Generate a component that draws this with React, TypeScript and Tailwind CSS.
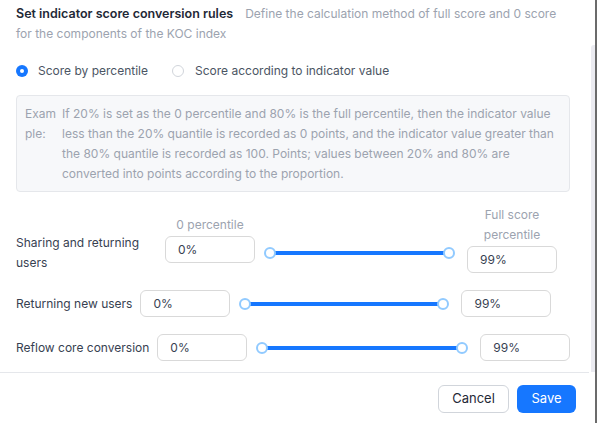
import React from 'react';

interface RuleRow {
  label: string;
  min: string;
  max: string;
  sliderWidth: string;
}

const rows: RuleRow[] = [
  { label: 'Sharing and returning users', min: '0%', max: '99%', sliderWidth: 'w-[191px]' },
  { label: 'Returning new users', min: '0%', max: '99%', sliderWidth: 'w-[210px]' },
  { label: 'Reflow core conversion', min: '0%', max: '99%', sliderWidth: 'w-[212px]' },
];

function Slider({ width, className = '' }: { width: string; className?: string }) {
  return (
    <div className={`relative h-3 flex items-center shrink-0 ${width} ${className}`}>
      <div className="absolute left-[6px] right-[6px] h-1 rounded-full bg-[#1677ff]" />
      <span className="absolute left-0 w-3 h-3 rounded-full bg-white border-2 border-[#91caff]" />
      <span className="absolute right-0 w-3 h-3 rounded-full bg-white border-2 border-[#91caff]" />
    </div>
  );
}

function PercentInput({ value }: { value: string }) {
  return (
    <div className="w-[90px] h-[27px] shrink-0 rounded-md border border-[#d9d9d9] bg-white flex items-center px-3 text-[12px] text-[#374151]">
      {value}
    </div>
  );
}

export default function App() {
  return (
    <div
      className="w-[597px] h-[423px] bg-white flex flex-col overflow-hidden border-r-2 border-[#6b6b6b]"
      style={{ fontFamily: 'Inter, "Noto Sans", sans-serif' }}
    >
      <div className="flex h-[372px]">
        <div className="flex-1 pl-4 pr-[21px] pt-1">
          {/* Heading */}
          <p className="text-[12px] leading-[20px] text-[#9ca3af]">
            <span className="text-[12.5px] font-semibold text-[#1f2937] mr-3">Set indicator score conversion rules</span>
            Define the calculation method of full score and 0 score for the components of the KOC index
          </p>

          {/* Mode radios */}
          <div className="flex items-center mt-[17px] h-5 text-[12px] text-[#4b5563]">
            <span className="w-3 h-3 rounded-full bg-[#1677ff] flex items-center justify-center">
              <span className="w-1 h-1 rounded-full bg-white" />
            </span>
            <span className="ml-[10px]">Score by percentile</span>
            <span className="ml-6 w-3 h-3 rounded-full border border-[#d1d5db]" />
            <span className="ml-[11px]">Score according to indicator value</span>
          </div>

          {/* Example */}
          <div className="mt-[14px] h-[97px] rounded border border-[#e5e7eb] bg-[#f7f8fa] pl-2 pr-3 pt-2 flex text-[12px] leading-[20px] text-[#9ca3af]">
            <span className="w-[37px] shrink-0 break-all pr-[6px]">Exam ple:</span>
            <span>
              If 20% is set as the 0 percentile and 80% is the full percentile, then the indicator value less than the
              20% quantile is recorded as 0 points, and the indicator value greater than the 80% quantile is recorded as
              100. Points; values between 20% and 80% are converted into points according to the proportion.
            </span>
          </div>

          {/* Rules */}
          <div className="mt-[13px] flex flex-col gap-[17px] text-[12px] text-[#374151]">
            {rows.map((row, i) => (
              <div key={row.label} className={`flex gap-2 ${i === 0 ? 'items-start' : 'items-center'}`}>
                <div className={`leading-[20px] ${i === 0 ? 'mt-[28px] max-w-[141px]' : 'whitespace-nowrap'}`}>
                  {row.label}
                </div>
                {i === 0 ? (
                  <div className="flex flex-col items-center mt-[10px]">
                    <span className="leading-[20px] text-[12px] text-[#9ca3af]">0 percentile</span>
                    <div className="mt-px">
                      <PercentInput value={row.min} />
                    </div>
                  </div>
                ) : (
                  <PercentInput value={row.min} />
                )}
                <Slider width={row.sliderWidth} className={`ml-px mr-1 ${i === 0 ? 'mt-[42px]' : ''}`} />
                {i === 0 ? (
                  <div className="flex flex-col items-center w-[90px]">
                    <span className="leading-[20px] text-[12px] text-[#9ca3af] text-center">Full score percentile</span>
                    <div className="mt-px">
                      <PercentInput value={row.max} />
                    </div>
                  </div>
                ) : (
                  <PercentInput value={row.max} />
                )}
              </div>
            ))}
          </div>
        </div>
        {/* Scroll thumb */}
        <div className="w-[6px] pt-[45px] shrink-0">
          <div className="h-full rounded-t bg-[#ebebf1]" />
        </div>
      </div>

      {/* Footer */}
      <div className="border-t border-[#e5e7eb] mr-[6px] flex justify-end gap-2 pr-[13px] pt-3">
        <button className="h-[28px] w-[71px] rounded-md border border-[#d1d5db] bg-white text-[13px] text-[#1f2937]">
          Cancel
        </button>
        <button className="h-[28px] w-[59px] rounded-md bg-[#1677ff] text-[13px] text-white">Save</button>
      </div>
    </div>
  );
}
